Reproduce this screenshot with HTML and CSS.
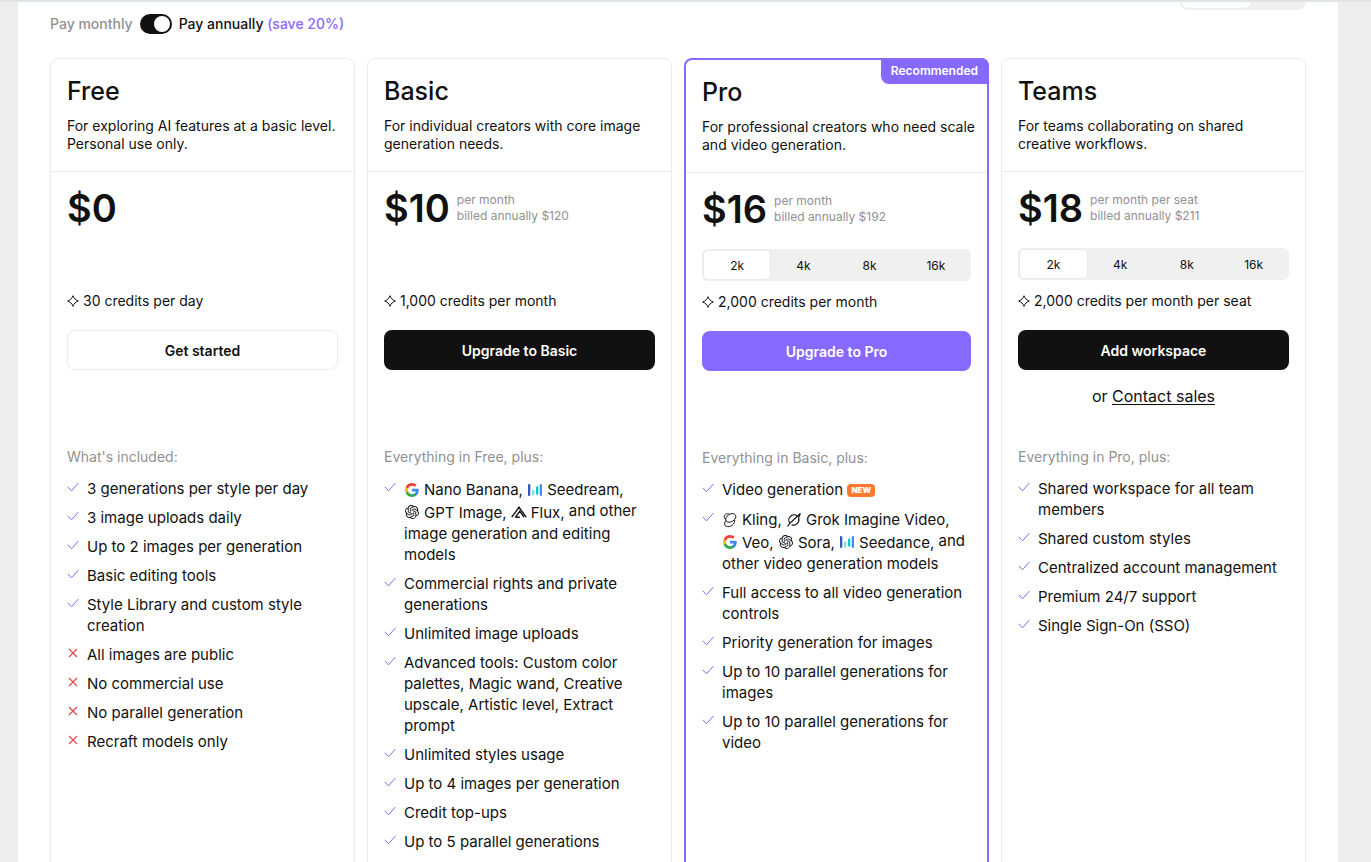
FILE: index.html
```
<!DOCTYPE html>
<html lang="en">
<head>
    <meta charset="UTF-8">
    <meta name="viewport" content="width=device-width, initial-scale=1.0">
    <title>Pricing</title>
    <link rel="stylesheet" href="styles.css">
</head>
<body>
    <svg class="sprite" aria-hidden="true">
        <symbol id="check" viewBox="0 0 12 12"><path d="M.7 5.8 4.5 9.8 11.4 2" fill="none" stroke="currentColor"/></symbol>
        <symbol id="cross" viewBox="0 0 12 12"><path d="M2 2l8 8M10 2l-8 8" fill="none" stroke="currentColor" stroke-width="1.2"/></symbol>
        <symbol id="spark" viewBox="0 0 12 12"><path d="M6 .7C6.9 3.3 8.7 5.1 11.3 6 8.7 6.9 6.9 8.7 6 11.3 5.1 8.7 3.3 6.9.7 6 3.3 5.1 5.1 3.3 6 .7Z" fill="none" stroke="currentColor"/></symbol>
        <symbol id="google" viewBox="0 0 24 24">
            <path fill="#4285f4" d="M23.5 12.3c0-.8-.1-1.6-.2-2.3H12v4.5h6.5c-.3 1.5-1.1 2.7-2.4 3.6v3h3.9c2.2-2.1 3.5-5.1 3.5-8.8z"/>
            <path fill="#34a853" d="M12 24c3.2 0 6-1.1 8-2.9l-3.9-3c-1.1.7-2.5 1.2-4.1 1.2-3.1 0-5.8-2.1-6.7-5H1.3v3.1C3.3 21.3 7.3 24 12 24z"/>
            <path fill="#fbbc05" d="M5.3 14.3c-.5-1.5-.5-3.1 0-4.6V6.6h-4c-1.7 3.4-1.7 7.4 0 10.8l4-3.1z"/>
            <path fill="#ea4335" d="M12 4.8c1.8 0 3.3.6 4.6 1.8L20 3.2C17.9 1.2 15.2 0 12 0 7.3 0 3.3 2.7 1.3 6.6l4 3.1c.9-2.9 3.6-4.9 6.7-4.9z"/>
        </symbol>
        <symbol id="seed" viewBox="0 0 14 14">
            <path fill="#325ab4" d="M0 1l2.3.6v10.8L0 13z"/>
            <path fill="#3c8cff" d="M11.7 1.6 14 1v12l-2.3-.6z"/>
            <path fill="#78e6dc" d="M4 6.5l2.2.6v5L4 12.7z"/>
            <path fill="#00c8d2" d="M8 3.8l2.2-.6v8.6L8 11.2z"/>
        </symbol>
        <symbol id="openai" viewBox="0 0 24 24"><path fill="currentColor" d="M22.2819 9.8211a5.9847 5.9847 0 0 0-.5157-4.9108 6.0462 6.0462 0 0 0-6.5098-2.9A6.0651 6.0651 0 0 0 4.9807 4.1818a5.9847 5.9847 0 0 0-3.9977 2.9 6.0462 6.0462 0 0 0 .7427 7.0966 5.98 5.98 0 0 0 .511 4.9107 6.051 6.051 0 0 0 6.5146 2.9001A5.9847 5.9847 0 0 0 13.2599 24a6.0557 6.0557 0 0 0 5.7718-4.2058 5.9894 5.9894 0 0 0 3.9977-2.9001 6.0557 6.0557 0 0 0-.7475-7.0729zm-9.022 12.6081a4.4755 4.4755 0 0 1-2.8764-1.0408l.1419-.0804 4.7783-2.7582a.7948.7948 0 0 0 .3927-.6813v-6.7369l2.02 1.1686a.071.071 0 0 1 .038.052v5.5826a4.504 4.504 0 0 1-4.4945 4.4944zm-9.6607-4.1254a4.4708 4.4708 0 0 1-.5346-3.0137l.142.0852 4.783 2.7582a.7712.7712 0 0 0 .7806 0l5.8428-3.3685v2.3324a.0804.0804 0 0 1-.0332.0615L9.74 19.9502a4.4992 4.4992 0 0 1-6.1408-1.6464zM2.3408 7.8956a4.485 4.485 0 0 1 2.3655-1.9728V11.6a.7664.7664 0 0 0 .3879.6765l5.8144 3.3543-2.0201 1.1685a.0757.0757 0 0 1-.071 0l-4.8303-2.7865A4.504 4.504 0 0 1 2.3408 7.872zm16.5963 3.8558L13.1038 8.364 15.1192 7.2a.0757.0757 0 0 1 .071 0l4.8303 2.7913a4.4944 4.4944 0 0 1-.6765 8.1042v-5.6772a.79.79 0 0 0-.407-.667zm2.0107-3.0231l-.142-.0852-4.7735-2.7818a.7759.7759 0 0 0-.7854 0L9.409 9.2297V6.8974a.0662.0662 0 0 1 .0284-.0615l4.8303-2.7866a4.4992 4.4992 0 0 1 6.6802 4.66zM8.3065 12.863l-2.02-1.1638a.0804.0804 0 0 1-.038-.0567V6.0742a4.4992 4.4992 0 0 1 7.3757-3.4537l-.142.0805L8.704 5.459a.7948.7948 0 0 0-.3927.6813zm1.0976-2.3654l2.602-1.4998 2.6069 1.4998v2.9994l-2.5974 1.4997-2.6067-1.4997Z"/></symbol>
        <symbol id="flux" viewBox="0 0 16 14"><path d="M.8 12.2 8 2.3l7.2 9.900M4.4 12.2h4.4M4.4 12.2 8.8 6.1l4.2 6.1" fill="none" stroke="currentColor" stroke-width="1.4"/></symbol>
        <symbol id="kling" viewBox="0 0 16 16">
            <g fill="#fff" stroke="currentColor">
                <path d="M4.600 9.200C1.500 6.800.6 4 2 2.200 3.200.7 5.500.6 7.500 1.400"/>
                <ellipse cx="7.6" cy="10.7" rx="6.3" ry="4.300" transform="rotate(-32 7.600 10.700)"/>
                <ellipse cx="8.900" cy="5.600" rx="6.300" ry="4.300" transform="rotate(-32 8.900 5.600)"/>
            </g>
        </symbol>
        <symbol id="grok" viewBox="0 0 16 16"><path d="M3.6 12.2A6 6 0 0 1 11.8 3.5M13.2 5.8A6 6 0 0 1 5.3 13.4M.8 15.4C3 12 3.4 10.8 5.8 9.5L15.4.6C13 4 13.8 5 13.2 5.8" fill="none" stroke="currentColor" stroke-width="1.4"/></symbol>
    </svg>

    <div class="page">
        <div class="top-strip">
            <div class="view-switch"><span></span></div>
        </div>

        <div class="billing">
            <label for="annual" class="muted">Pay monthly</label>
            <input type="checkbox" id="annual" class="toggle" checked>
            <label for="annual">Pay annually <span class="save">(save 20%)</span></label>
        </div>

        <main class="plans">
            <section class="plan">
                <div class="plan-head">
                    <h2>Free</h2>
                    <p>For exploring AI features at a basic level. Personal use only.</p>
                </div>
                <div class="plan-body">
                    <div class="price"><strong>$0</strong></div>
                    <div class="volume"></div>
                    <p class="credits"><svg class="mark"><use href="#spark"/></svg>30 credits per day</p>
                    <button class="btn btn-light">Get started</button>
                    <div class="contact"></div>
                    <h3>What's included:</h3>
                    <ul class="features">
                        <li><svg class="mark"><use href="#check"/></svg><div>3 generations per style per day</div></li>
                        <li><svg class="mark"><use href="#check"/></svg><div>3 image uploads daily</div></li>
                        <li><svg class="mark"><use href="#check"/></svg><div>Up to 2 images per generation</div></li>
                        <li><svg class="mark"><use href="#check"/></svg><div>Basic editing tools</div></li>
                        <li><svg class="mark"><use href="#check"/></svg><div>Style Library and custom style creation</div></li>
                        <li class="no"><svg class="mark"><use href="#cross"/></svg><div>All images are public</div></li>
                        <li class="no"><svg class="mark"><use href="#cross"/></svg><div>No commercial use</div></li>
                        <li class="no"><svg class="mark"><use href="#cross"/></svg><div>No parallel generation</div></li>
                        <li class="no"><svg class="mark"><use href="#cross"/></svg><div>Recraft models only</div></li>
                    </ul>
                </div>
            </section>

            <section class="plan">
                <div class="plan-head">
                    <h2>Basic</h2>
                    <p>For individual creators with core image generation needs.</p>
                </div>
                <div class="plan-body">
                    <div class="price"><strong>$10</strong><span>per month<br>billed annually $120</span></div>
                    <div class="volume"></div>
                    <p class="credits"><svg class="mark"><use href="#spark"/></svg>1,000 credits per month</p>
                    <button class="btn">Upgrade to Basic</button>
                    <div class="contact"></div>
                    <h3>Everything in Free, plus:</h3>
                    <ul class="features">
                        <li><svg class="mark"><use href="#check"/></svg><div><span class="model"><svg><use href="#google"/></svg>Nano Banana,</span> <span class="model"><svg><use href="#seed"/></svg>Seedream,</span> <span class="model"><svg><use href="#openai"/></svg>GPT Image,</span> <span class="model"><svg><use href="#flux"/></svg>Flux,</span> and other image generation and editing models</div></li>
                        <li><svg class="mark"><use href="#check"/></svg><div>Commercial rights and private generations</div></li>
                        <li><svg class="mark"><use href="#check"/></svg><div>Unlimited image uploads</div></li>
                        <li><svg class="mark"><use href="#check"/></svg><div>Advanced tools: Custom color palettes, Magic wand, Creative upscale, Artistic level, Extract prompt</div></li>
                        <li><svg class="mark"><use href="#check"/></svg><div>Unlimited styles usage</div></li>
                        <li><svg class="mark"><use href="#check"/></svg><div>Up to 4 images per generation</div></li>
                        <li><svg class="mark"><use href="#check"/></svg><div>Credit top-ups</div></li>
                        <li><svg class="mark"><use href="#check"/></svg><div>Up to 5 parallel generations</div></li>
                    </ul>
                </div>
            </section>

            <section class="plan plan-pro">
                <div class="badge">Recommended</div>
                <div class="plan-head">
                    <h2>Pro</h2>
                    <p>For professional creators who need scale and video generation.</p>
                </div>
                <div class="plan-body">
                    <div class="price"><strong>$16</strong><span>per month<br>billed annually $192</span></div>
                    <div class="volume segments">
                        <label><input type="radio" name="pro-volume" checked>2k</label>
                        <label><input type="radio" name="pro-volume">4k</label>
                        <label><input type="radio" name="pro-volume">8k</label>
                        <label><input type="radio" name="pro-volume">16k</label>
                    </div>
                    <p class="credits"><svg class="mark"><use href="#spark"/></svg>2,000 credits per month</p>
                    <button class="btn btn-pro">Upgrade to Pro</button>
                    <div class="contact"></div>
                    <h3>Everything in Basic, plus:</h3>
                    <ul class="features">
                        <li><svg class="mark"><use href="#check"/></svg><div>Video generation <span class="new">NEW</span></div></li>
                        <li><svg class="mark"><use href="#check"/></svg><div><span class="model"><svg><use href="#kling"/></svg>Kling,</span> <span class="model"><svg><use href="#grok"/></svg>Grok Imagine Video,</span> <span class="model"><svg><use href="#google"/></svg>Veo,</span> <span class="model"><svg><use href="#openai"/></svg>Sora,</span> <span class="model"><svg><use href="#seed"/></svg>Seedance,</span> and other video generation models</div></li>
                        <li><svg class="mark"><use href="#check"/></svg><div>Full access to all video generation controls</div></li>
                        <li><svg class="mark"><use href="#check"/></svg><div>Priority generation for images</div></li>
                        <li><svg class="mark"><use href="#check"/></svg><div>Up to 10 parallel generations for images</div></li>
                        <li><svg class="mark"><use href="#check"/></svg><div>Up to 10 parallel generations for video</div></li>
                    </ul>
                </div>
            </section>

            <section class="plan">
                <div class="plan-head">
                    <h2>Teams</h2>
                    <p>For teams collaborating on shared creative workflows.</p>
                </div>
                <div class="plan-body">
                    <div class="price"><strong>$18</strong><span>per month per seat<br>billed annually $211</span></div>
                    <div class="volume segments">
                        <label><input type="radio" name="teams-volume" checked>2k</label>
                        <label><input type="radio" name="teams-volume">4k</label>
                        <label><input type="radio" name="teams-volume">8k</label>
                        <label><input type="radio" name="teams-volume">16k</label>
                    </div>
                    <p class="credits"><svg class="mark"><use href="#spark"/></svg>2,000 credits per month per seat</p>
                    <button class="btn">Add workspace</button>
                    <div class="contact">or <a href="#">Contact sales</a></div>
                    <h3>Everything in Pro, plus:</h3>
                    <ul class="features">
                        <li><svg class="mark"><use href="#check"/></svg><div>Shared workspace for all team members</div></li>
                        <li><svg class="mark"><use href="#check"/></svg><div>Shared custom styles</div></li>
                        <li><svg class="mark"><use href="#check"/></svg><div>Centralized account management</div></li>
                        <li><svg class="mark"><use href="#check"/></svg><div>Premium 24/7 support</div></li>
                        <li><svg class="mark"><use href="#check"/></svg><div>Single Sign-On (SSO)</div></li>
                    </ul>
                </div>
            </section>
        </main>
    </div>
</body>
</html>
```

FILE: styles.css
```
* {
    box-sizing: border-box;
}

body {
    margin: 0;
    padding: 0 33px 0 18px;
    background: #ededed;
    border-top: 2px solid #dde5ea;
    color: #111;
    font-family: Inter, "Liberation Sans", sans-serif;
    font-size: 16px;
    line-height: 21px;
}

h2, h3, p, ul {
    margin: 0;
    padding: 0;
}

.sprite {
    display: none;
}

.page {
    background: #fff;
    padding: 0 32px 32px;
}

.top-strip {
    height: 8px;
    overflow: hidden;
    display: flex;
    justify-content: flex-end;
    align-items: flex-end;
}

.view-switch {
    width: 126px;
    height: 32px;
    padding: 2px;
    background: #f0f0f0;
    border-radius: 8px;
    flex-shrink: 0;
}

.view-switch span {
    display: block;
    width: 68px;
    height: 28px;
    background: #fff;
    border-radius: 6px;
}

.billing {
    display: flex;
    align-items: center;
    gap: 7px;
    height: 28px;
    margin-bottom: 20px;
    font-size: 14px;
    font-weight: 500;
    line-height: 20px;
}

.muted {
    color: #919191;
}

.save {
    color: #8769ff;
}

.toggle {
    appearance: none;
    width: 32px;
    height: 20px;
    margin: 0;
    padding: 2px;
    border-radius: 10px;
    background: #111;
    cursor: pointer;
}

.toggle::before {
    content: "";
    display: block;
    width: 16px;
    height: 16px;
    border-radius: 50%;
    background: #fff;
}

.toggle:checked::before {
    margin-left: auto;
}

.plans {
    display: grid;
    grid-template-columns: repeat(4, 1fr);
    gap: 12px;
}

.plan {
    position: relative;
    border: 1px solid #ebebeb;
    border-radius: 8px;
}

.plan-pro {
    border: 2px solid #8769ff;
}

.badge {
    position: absolute;
    top: -2px;
    right: -2px;
    padding: 3px 11px 3px 10px;
    border-radius: 0 8px 0 8px;
    background: #8769ff;
    color: #fff;
    font-size: 12px;
    font-weight: 600;
    line-height: 20px;
}

.plan-head {
    padding: 16px 8px 18px 16px;
    border-bottom: 1px solid #ebebeb;
}

.plan-head h2 {
    margin-bottom: 10px;
    font-size: 25px;
    font-weight: 500;
    line-height: 32px;
}

.plan-head p {
    font-size: 14px;
    line-height: 18px;
}

.plan-body {
    padding: 12px 16px 32px;
}

.price {
    display: flex;
    align-items: center;
    gap: 7px;
    height: 48px;
    margin-bottom: 16px;
}

.price strong {
    font-size: 38px;
    font-weight: 600;
    line-height: 48px;
}

.price span {
    color: #919191;
    font-size: 12px;
    line-height: 16px;
}

.volume {
    height: 32px;
    margin-bottom: 11px;
}

.segments {
    display: flex;
    padding: 2px;
    border-radius: 6px;
    background: #f0f0f0;
    font-size: 12px;
}

.segments label {
    flex: 1;
    display: flex;
    align-items: center;
    justify-content: center;
    border-radius: 4px;
    cursor: pointer;
}

.segments label:has(:checked) {
    background: #fff;
    box-shadow: 0 0 2px rgba(0, 0, 0, 0.1);
}

.segments input {
    appearance: none;
    margin: 0;
}

.mark {
    width: 12px;
    height: 12px;
    flex-shrink: 0;
}

.credits {
    display: flex;
    align-items: center;
    gap: 4px;
    margin-bottom: 20px;
    font-size: 14px;
    line-height: 19px;
}

.btn {
    display: block;
    width: 100%;
    height: 40px;
    border: 0;
    border-radius: 8px;
    background: #111;
    color: #fff;
    font-family: inherit;
    font-size: 14px;
    font-weight: 600;
    cursor: pointer;
}

.btn-light {
    border: 1px solid #ebebeb;
    background: #fff;
    color: #111;
}

.btn-pro {
    background: #8769ff;
}

.contact {
    height: 21px;
    margin: 16px 0 40px;
    text-align: center;
}

.contact a {
    color: inherit;
    text-underline-offset: 2px;
}

.plan-body h3 {
    margin-bottom: 11px;
    color: #919191;
    font-size: 14px;
    font-weight: 400;
    line-height: 20px;
}

.features {
    display: flex;
    flex-direction: column;
    gap: 8px;
    list-style: none;
    font-size: 15px;
}

.features li {
    display: flex;
    gap: 8px;
}

.features .mark {
    margin-top: 3px;
    color: #8769ff;
}

.features .no .mark {
    color: #e5484d;
}

.model {
    display: inline-flex;
    align-items: center;
    gap: 4px;
    line-height: 21px;
    vertical-align: middle;
}

.model svg {
    width: 16px;
    height: 14px;
}

.new {
    display: inline-block;
    padding: 0 4px;
    border-radius: 4px;
    background: #ff7a2f;
    color: #fff;
    font-size: 8px;
    font-weight: 900;
    line-height: 13px;
    vertical-align: middle;
}
```
